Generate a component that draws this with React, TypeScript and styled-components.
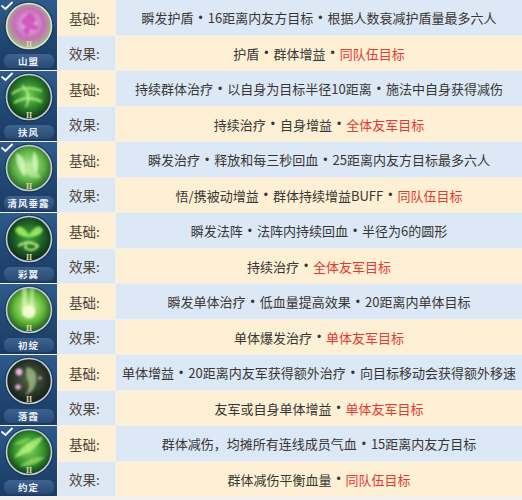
import React from 'react';
import styled, { createGlobalStyle } from 'styled-components';

const Global = createGlobalStyle`
  html, body { margin: 0; padding: 0; background: #f1f0ec; }
  body { font-family: "Noto Sans CJK SC", "Noto Sans", sans-serif; }
`;

const Table = styled.div`
  width: 522px;
  display: flex;
  flex-direction: column;
  gap: 1px;
  background: #f1f0ec;
`;

const Block = styled.div`
  display: grid;
  grid-template-columns: 57px 57px 1fr;
  grid-template-rows: 35px 34px;
  column-gap: 1px;
  row-gap: 1px;
`;

const IconCell = styled.div`
  grid-row: 1 / span 2;
  background: linear-gradient(180deg, #2f5c8c 0%, #224a76 45%, #1b3b63 100%);
  display: flex;
  flex-direction: column;
  align-items: center;
  position: relative;
  overflow: hidden;
`;

const IconSvg = styled.svg`
  width: 50px;
  height: 50px;
  margin-top: 1px;
  display: block;
`;

const Check = styled.svg`
  position: absolute;
  left: 1px;
  top: 1px;
  width: 12px;
  height: 10px;
`;

const NameBand = styled.div`
  margin-top: auto;
  margin-bottom: 2px;
  width: 50px;
  height: 14px;
  border-radius: 6px;
  background: linear-gradient(180deg, rgba(110, 150, 195, 0.4), rgba(70, 110, 160, 0.3));
  color: #eef2f8;
  font-size: 9.5px;
  font-weight: 700;
  line-height: 14px;
  text-align: center;
  letter-spacing: 1px;
`;

const Label = styled.div<{ $kind: 'base' | 'effect' }>`
  background: ${(p) => (p.$kind === 'base' ? '#fdf0d4' : '#dce8f5')};
  display: flex;
  align-items: center;
  padding-left: 11px;
  font-size: 13.5px;
  color: #4f4538;
`;

const Content = styled.div<{ $kind: 'base' | 'effect' }>`
  background: ${(p) => (p.$kind === 'base' ? '#dce8f5' : '#fdf0d4')};
  display: flex;
  align-items: center;
  justify-content: center;
  font-size: 13px;
  color: #383634;
  white-space: nowrap;
  overflow: hidden;
`;

const Dot = styled.span`
  font-family: "Liberation Sans", Arial, sans-serif;
  font-size: 12px;
  margin: 0 5px;
`;

const Red = styled.span`
  color: #e53a32;
`;

type Skill = {
  name: string;
  check: boolean;
  base: string[];
  effect: string[];
  target: string;
};

const skills: Skill[] = [
  { name: '山盟', check: true, base: ['瞬发护盾', '16距离内友方目标', '根据人数衰减护盾量最多六人'], effect: ['护盾', '群体增益'], target: '同队伍目标' },
  { name: '扶风', check: true, base: ['持续群体治疗', '以自身为目标半径10距离', '施法中自身获得减伤'], effect: ['持续治疗', '自身增益'], target: '全体友军目标' },
  { name: '清风垂露', check: true, base: ['瞬发治疗', '释放和每三秒回血', '25距离内友方目标最多六人'], effect: ['悟/携被动增益', '群体持续增益BUFF'], target: '同队伍目标' },
  { name: '彩翼', check: false, base: ['瞬发法阵', '法阵内持续回血', '半径为6的圆形'], effect: ['持续治疗'], target: '全体友军目标' },
  { name: '初绽', check: false, base: ['瞬发单体治疗', '低血量提高效果', '20距离内单体目标'], effect: ['单体爆发治疗'], target: '单体友军目标' },
  { name: '落霞', check: false, base: ['单体增益', '20距离内友军获得额外治疗', '向目标移动会获得额外移速'], effect: ['友军或自身单体增益'], target: '单体友军目标' },
  { name: '约定', check: true, base: ['群体减伤，均摊所有连线成员气血', '15距离内友方目标'], effect: ['群体减伤平衡血量'], target: '同队伍目标' },
];

const palettes = [
  { c0: '#f4c4ea', c1: '#c66cb8', c2: '#9cc47e', rim: '#d4e8c8' },
  { c0: '#6cd048', c1: '#2a7a28', c2: '#0e3018', rim: '#c0ccd8' },
  { c0: '#c0ee98', c1: '#5eb444', c2: '#245e26', rim: '#c0ccd8' },
  { c0: '#4aa83a', c1: '#1c5e26', c2: '#0a2814', rim: '#c0ccd8' },
  { c0: '#dcf8a8', c1: '#62b838', c2: '#1a5220', rim: '#c0ccd8' },
  { c0: '#566650', c1: '#2c3a2a', c2: '#121a14', rim: '#c0ccd8' },
  { c0: '#84d85a', c1: '#36922c', c2: '#103816', rim: '#c0ccd8' },
];

function Decor({ i }: { i: number }) {
  switch (i) {
    case 0:
      return (
        <g fill="#cf48bc" opacity="0.85" filter="url(#soft)">
          <path d="M18 19 q6 -7 13 -3 q2 4 -2 7 l6 3 q-3 5 -9 2 l-2 6 q-4 -1 -5 -4 l3 -5 q-6 -2 -4 -6z" />
          <circle cx="26" cy="15" r="3" />
        </g>
      );
    case 1:
      return (
        <g fill="none" stroke="#b4f888" strokeWidth="2.4" opacity="0.8" filter="url(#soft)">
          <path d="M8 22 q12 -10 30 -3" />
          <path d="M10 31 q14 -9 28 -1" />
          <path d="M18 13 q10 10 4 22" stroke="#e4ffd4" strokeWidth="1.6" />
        </g>
      );
    case 2:
      return (
        <g fill="#e2ffcc" opacity="0.7" filter="url(#soft)">
          <path d="M12 10 q12 4 9 24 q-9 -8 -9 -24z" />
          <path d="M30 8 q7 9 2 24 q-7 -11 -2 -24z" />
          <path d="M18 26 q14 -3 19 9 q-12 2 -19 -9z" opacity="0.6" />
        </g>
      );
    case 3:
      return (
        <g filter="url(#soft)">
          <path d="M25 21 q-9 -14 -14 -5 q2 7 14 7 q12 0 14 -7 q-5 -9 -14 5z" fill="#a8f464" opacity="0.85" />
          <path d="M14 32 q11 -7 20 0 q-5 6 -11 3 q-4 -2 0 -4" fill="none" stroke="#ccff88" strokeWidth="1.8" />
        </g>
      );
    case 4:
      return (
        <g filter="url(#soft)">
          <rect x="18" y="3" width="5" height="28" fill="#ecffcc" opacity="0.55" />
          <rect x="26" y="3" width="4" height="26" fill="#ecffcc" opacity="0.45" />
          <circle cx="25" cy="27" r="6.5" fill="#f6ffdc" opacity="0.85" />
        </g>
      );
    case 5:
      return (
        <g filter="url(#soft)">
          <path d="M23 11 q11 2 9 15 q-2 11 -11 13 q7 -9 2 -17 q-2 -6 0 -11z" fill="#bcdc98" opacity="0.6" />
          <circle cx="15" cy="16" r="3.4" fill="#f4b0e4" />
          <circle cx="14" cy="31" r="2.8" fill="#f4b0e4" opacity="0.9" />
          <circle cx="36" cy="22" r="1.8" fill="#f4b0e4" opacity="0.8" />
        </g>
      );
    default:
      return (
        <g fill="#bcf884" opacity="0.75" filter="url(#soft)">
          <path d="M10 31 q13 -19 29 -21 q-7 15 -29 21z" />
          <path d="M15 39 q15 -11 26 -9 q-11 11 -26 9z" opacity="0.7" />
          <path d="M9 18 q8 -7 18 -7 q-7 7 -18 7z" opacity="0.6" />
        </g>
      );
  }
}

function SkillIcon({ i }: { i: number }) {
  const p = palettes[i];
  const id = `g${i}`;
  return (
    <IconSvg viewBox="0 0 50 50">
      <defs>
        <radialGradient id={id} cx="50%" cy="45%" r="55%">
          <stop offset="0%" stopColor={p.c0} />
          <stop offset="60%" stopColor={p.c1} />
          <stop offset="100%" stopColor={p.c2} />
        </radialGradient>
        <filter id="soft" x="-20%" y="-20%" width="140%" height="140%">
          <feGaussianBlur stdDeviation="0.9" />
        </filter>
        <clipPath id={`c${i}`}>
          <circle cx="25" cy="25" r="22.5" />
        </clipPath>
      </defs>
      <circle cx="25" cy="25" r="24.5" fill="#0c2038" opacity="0.45" />
      <circle cx="25" cy="25" r="22.5" fill={`url(#${id})`} />
      <g clipPath={`url(#c${i})`}>
        <Decor i={i} />
      </g>
      <circle cx="25" cy="25" r="22.5" fill="none" stroke={p.rim} strokeWidth="1.6" />
      <text x="25" y="45.5" textAnchor="middle" fontSize="8" fontWeight="700" fill="#e6dcb8" fontFamily="Liberation Serif, serif">II</text>
    </IconSvg>
  );
}

function Joined({ parts }: { parts: string[] }) {
  return (
    <>
      {parts.map((t, k) => (
        <React.Fragment key={k}>
          {k > 0 && <Dot>•</Dot>}
          {t}
        </React.Fragment>
      ))}
    </>
  );
}

export default function App() {
  return (
    <>
      <Global />
      <Table>
        {skills.map((s, i) => (
          <Block key={s.name}>
            <IconCell>
              <SkillIcon i={i} />
              {s.check && (
                <Check viewBox="0 0 12 10">
                  <path d="M1 5 L4.5 8 L11 1.5" fill="none" stroke="#ffffff" strokeWidth="1.8" strokeLinecap="round" />
                </Check>
              )}
              <NameBand>{s.name}</NameBand>
            </IconCell>
            <Label $kind="base">基础:</Label>
            <Content $kind="base">
              <Joined parts={s.base} />
            </Content>
            <Label $kind="effect">效果:</Label>
            <Content $kind="effect">
              <Joined parts={s.effect} />
              <Dot>•</Dot>
              <Red>{s.target}</Red>
            </Content>
          </Block>
        ))}
      </Table>
    </>
  );
}
